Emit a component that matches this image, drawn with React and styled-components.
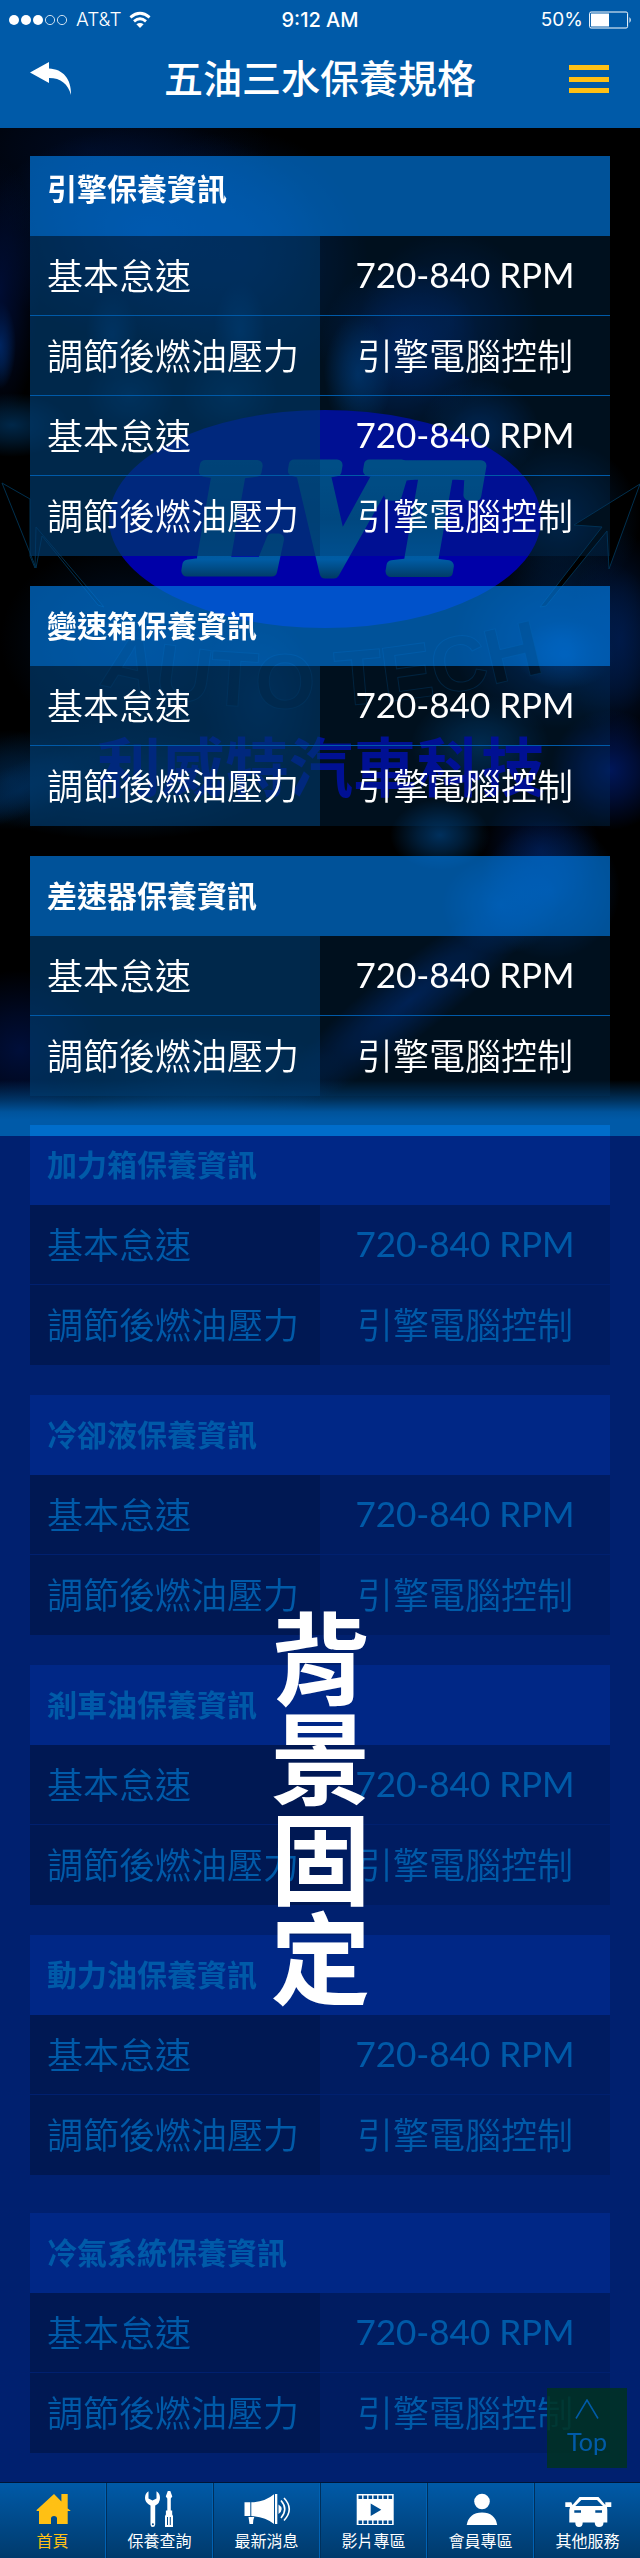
import React from "react";
import styled, { createGlobalStyle } from "styled-components";

const cjk = '"Noto Sans CJK TC", "Noto Sans CJK SC", sans-serif';

const GlobalStyle = createGlobalStyle`
  *, *::before, *::after { box-sizing: border-box; }
  body { margin: 0; background: #005aa8; color: #fff; font-family: ${cjk}; }
  button { border: 0; padding: 0; background: none; color: inherit; font: inherit; cursor: pointer; }
  svg { display: block; }
`;

const Page = styled.div`
  display: flex;
  flex-direction: column;
`;

/* ---------- header ---------- */

const Header = styled.header`
  background: #005aa8;
  padding-bottom: 16px;
`;

const StatusBar = styled.div`
  display: grid;
  grid-template-columns: 1fr auto 1fr;
  align-items: center;
  height: 40px;
  padding: 0 8px;
  font-family: Inter, Roboto, sans-serif;
  font-size: 20px;
  line-height: 24px;
`;

const StatusGroup = styled.div`
  display: flex;
  align-items: center;
  justify-content: ${(p) => (p.$end ? "flex-end" : "flex-start")};
  gap: ${(p) => (p.$end ? 6 : 8)}px;
`;

const Carrier = styled.span`
  font-size: 19px;
  font-weight: 300;
`;

const Clock = styled.span`
  font-weight: 500;
`;

const Percent = styled.span`
  font-size: 19px;
  font-weight: 400;
`;

const TitleBar = styled.div`
  display: grid;
  grid-template-columns: 42px 1fr 42px;
  align-items: center;
  height: 72px;
  padding: 0 30px;
`;

const BarButton = styled.button`
  padding-top: 6px;
`;

const Title = styled.h1`
  margin: 0;
  text-align: center;
  font-size: 39px;
  line-height: 48px;
  font-weight: 500;
`;

/* ---------- content ---------- */

const Main = styled.main`
  position: relative;
  isolation: isolate;
  padding: 28px 30px 29px;
  background: #005aa8;
`;

const Scene = styled.svg`
  position: absolute;
  z-index: -1;
  top: 0;
  left: 0;
  width: 100%;
  height: 1008px;
`;

const Panel = styled.table`
  width: 100%;
  table-layout: fixed;
  border-spacing: 0;
  margin-bottom: ${(p) => p.$gap ?? 30}px;
  text-align: left;
`;

const PanelHead = styled.th`
  height: 80px;
  padding: 0 17px ${(p) => (p.$raised ? 18 : 4)}px;
  background: rgba(0, 117, 218, 0.7);
  font-size: 30px;
  line-height: 40px;
  font-weight: 700;
`;

const Row = styled.tr`
  &:not(:last-child) > * {
    border-bottom: 1px solid #005aa8;
  }
`;

const Label = styled.th`
  height: 80px;
  padding: 0 0 4px 17px;
  background: rgba(0, 57, 107, 0.7);
  font-size: 36px;
  line-height: 48px;
  font-weight: 350;
  white-space: nowrap;
`;

const Value = styled.td`
  height: 80px;
  padding: 0 0 4px;
  background: rgba(0, 53, 100, 0.3);
  font-family: ${(p) => (p.$latin ? "Lato, sans-serif" : cjk)};
  font-size: ${(p) => (p.$latin ? 35 : 36)}px;
  line-height: 48px;
  font-weight: ${(p) => (p.$latin ? 400 : 350)};
  text-align: center;
  white-space: nowrap;
`;

const TopButton = styled.button`
  position: absolute;
  right: 13px;
  bottom: 14px;
  display: flex;
  flex-direction: column;
  align-items: center;
  justify-content: center;
  gap: 6px;
  width: 80px;
  height: 80px;
  background: rgba(0, 140, 48, 0.85);
  && {
    font-family: Lato, sans-serif;
    font-size: 25px;
    line-height: 32px;
  }
`;

const Shade = styled.div`
  position: absolute;
  top: 1008px;
  right: 0;
  bottom: 0;
  left: 0;
  display: flex;
  align-items: center;
  justify-content: center;
  pointer-events: none;
  &::before {
    content: "";
    position: absolute;
    inset: 0;
    background: #005aa8;
    mix-blend-mode: multiply;
  }
`;

const ShadeText = styled.p`
  position: relative;
  margin: 0;
  writing-mode: vertical-rl;
  font-size: 100px;
  line-height: 100px;
  font-weight: 700;
`;

/* ---------- tab bar ---------- */

const TabBar = styled.nav`
  display: flex;
  height: 76px;
  border-top: 1px solid #001536;
  background: linear-gradient(#005aa8, #003a6c);
`;

const Tab = styled.a`
  flex: 1;
  display: flex;
  flex-direction: column;
  align-items: center;
  padding-top: 7px;
  color: ${(p) => (p.$active ? "#ffc014" : "#fff")};
  text-decoration: none;
  font-size: 16px;
  line-height: 24px;
  border-left: 1px solid #00305c;
  border-right: 1px solid #0062b4;
  &:first-child { border-left: 0; }
  &:last-child { border-right: 0; }
`;

const TabIcon = styled.svg`
  width: 48px;
  height: 38px;
  fill: currentColor;
`;

/* ---------- drawings ---------- */

const glows = [
  [90, 150, 180, 90, "#000a20", 1],
  [150, 235, 170, 110, "#002060", 0.8],
  [240, 260, 130, 130, "#001c50", 0.7],
  [0, 345, 16, 44, "#0048a0", 0.8],
  [0, 290, 40, 130, "#001040", 0.8],
  [12, 425, 60, 32, "#003868", 0.7],
  [112, 335, 26, 44, "#004890", 0.5],
  [240, 330, 26, 48, "#005098", 0.5],
  [130, 395, 46, 40, "#004078", 0.5],
  [230, 395, 50, 40, "#004070", 0.5],
  [400, 350, 80, 90, "#002878", 0.7],
  [358, 375, 34, 60, "#0050a0", 0.5],
  [450, 320, 90, 90, "#002468", 0.5],
  [480, 430, 60, 50, "#003c90", 0.5],
  [560, 520, 80, 80, "#003878", 0.5],
  [560, 640, 110, 90, "#003a88", 0.6],
  [565, 655, 50, 34, "#0060d0", 0.4],
  [620, 640, 50, 110, "#001c50", 0.8],
  [130, 640, 130, 100, "#001838", 0.7],
  [120, 780, 170, 60, "#002850", 0.7],
  [10, 780, 70, 50, "#003468", 0.5],
  [260, 700, 60, 90, "#003878", 0.4],
  [480, 745, 70, 50, "#003868", 0.7],
  [610, 770, 60, 60, "#001c70", 0.8],
  [440, 835, 50, 36, "#003c74", 0.8],
  [540, 850, 60, 60, "#001444", 0.8],
  [500, 905, 60, 50, "#0058c8", 0.4],
  [550, 890, 70, 70, "#004098", 0.5],
  [20, 1050, 90, 80, "#001040", 0.9],
  [200, 1075, 150, 50, "#003468", 0.6],
];

const GaragePicture = () => (
  <Scene viewBox="0 128 640 1008" preserveAspectRatio="none" aria-hidden="true">
    <defs>
      {glows.map(([, , , , color, strength], i) => (
        <radialGradient key={i} id={`glow${i}`}>
          <stop offset="0" stopColor={color} stopOpacity={strength} />
          <stop offset="0.45" stopColor={color} stopOpacity={strength * 0.6} />
          <stop offset="1" stopColor={color} stopOpacity="0" />
        </radialGradient>
      ))}
      <linearGradient id="horizon" x1="0" y1="0" x2="0" y2="1">
        <stop offset="0" stopColor="#005aa8" stopOpacity="0" />
        <stop offset="0.5" stopColor="#005aa8" stopOpacity="0.55" />
        <stop offset="0.8" stopColor="#005aa8" stopOpacity="0.92" />
        <stop offset="1" stopColor="#005aa8" />
      </linearGradient>
      <linearGradient id="metal" gradientUnits="userSpaceOnUse" x1="0" y1="461" x2="0" y2="577">
        <stop offset="0" stopColor="#005a96" />
        <stop offset="0.5" stopColor="#00508c" />
        <stop offset="0.85" stopColor="#005ca4" />
        <stop offset="1" stopColor="#003c68" />
      </linearGradient>
      <path id="arc" d="M98 684Q300 738 560 668" />
    </defs>
    <rect y="128" width="640" height="1008" fill="#000" />
    {glows.map(([x, y, rx, ry], i) => (
      <ellipse key={i} cx={x} cy={y} rx={rx} ry={ry} fill={`url(#glow${i})`} />
    ))}
    <g transform="rotate(-38 410 1000)">
      <ellipse cx="410" cy="1000" rx="170" ry="36" fill="url(#glow1)" />
    </g>
    <g transform="rotate(-24 20 790)">
      <ellipse cx="20" cy="790" rx="110" ry="26" fill="url(#glow20)" />
    </g>
    <g fill="#000" stroke="#00304e" strokeWidth="1" strokeLinejoin="round">
      <path d="M2 483L30 499V556L35 568L36 527L104 607L98 605L42 536L36 568Z" />
      <path d="M640 484L574 525L602 527L540 607L546 606L607 531L609 569Z" />
    </g>
    <ellipse cx="325" cy="519" rx="216" ry="109" fill="#0000a8" />
    <text
      x="188 284 378"
      y="571"
      fontFamily="Liberation Serif, serif"
      fontWeight="700"
      fontStyle="italic"
      fontSize="160"
      fill="url(#metal)"
      stroke="url(#metal)"
      strokeWidth="11"
      strokeLinejoin="round"
    >
      LVT
    </text>
    <text
      fontFamily="Liberation Sans, sans-serif"
      fontWeight="700"
      fontSize="78"
      fill="#000"
      fillOpacity="0.7"
      stroke="#003050"
      strokeOpacity="0.6"
    >
      <textPath href="#arc">AUTO TECH</textPath>
    </text>
    <text x="97" y="791" fontFamily={cjk} fontWeight="700" fontSize="64" fill="#0000a8">
      利威特汽車科技
    </text>
    <rect y="1080" width="640" height="40" fill="url(#horizon)" />
    <rect y="1120" width="640" height="16" fill="#005aa8" />
  </Scene>
);

const SignalDots = () => (
  <svg width="60" height="12" viewBox="0 0 60 12" role="img" aria-label="訊號">
    {[0, 1, 2, 3, 4].map((i) => (
      <circle
        key={i}
        cx={6 + i * 12}
        cy="6"
        r={i < 3 ? 5 : 4.6}
        fill={i < 3 ? "#fff" : "none"}
        stroke={i < 3 ? "none" : "#fff"}
        strokeWidth="0.8"
      />
    ))}
  </svg>
);

const Wifi = () => (
  <svg width="22" height="18" viewBox="0 0 22 18" fill="none" stroke="#fff" strokeWidth="2.8" role="img" aria-label="Wi-Fi">
    <path d="M1.4 6.4Q11-1.8 20.600 6.400" />
    <path d="M5 10.400Q11 5 17 10.400" />
    <path d="M11 17L7.400 13.300Q11 10.600 14.600 13.300Z" fill="#fff" stroke="none" />
  </svg>
);

const Battery = () => (
  <svg width="43" height="18" viewBox="0 0 43 18" role="img" aria-label="電量">
    <rect x="0.6" y="1" width="38" height="16" rx="1.500" fill="none" stroke="#fff" strokeWidth="1" />
    <rect x="2" y="2.500" width="18" height="13" fill="#fff" />
    <path d="M40.500 6Q43 9 40.500 12Z" fill="#fff" />
  </svg>
);

const BackArrow = () => (
  <svg width="42" height="34" viewBox="0 0 42 34" fill="#fff" aria-hidden="true">
    <path d="M0 10.500L19 0V6.500C33 7 41.500 17 41 33C38 22 31 16 19 16V21Z" />
  </svg>
);

const Burger = () => (
  <svg width="42" height="28" viewBox="0 0 42 28" fill="#ffc014" aria-hidden="true">
    <path d="M1 0H41V5H1ZM1 12H41V17H1ZM1 23H41V28H1Z" />
  </svg>
);

const icons = {
  home: (
    <path d="M25 4L32.400 11.500V4H38.700V18.500L41.400 20.500V21H38.700V34H28V28.500Q28 26 25 26Q22 26 22 28.500V34H10V21H7.600V20Z" />
  ),
  tools: (
    <>
      <path d="M12.500 1.300V8.500L16.500 10.500L20.500 8.500V1.300Q24 3.300 24 8Q24 13.300 19.200 15.500V34.500Q19 37 16.800 37Q14.500 37 14.500 34.500V15.500Q9 13 9 8Q9 3.300 12.500 1.300ZM16.900 33.300A1 1 0 1 0 16.900 35.300A1 1 0 1 0 16.900 33.300Z" fillRule="evenodd" />
      <path d="M31.800 1H34.300L36.300 6.500L34.800 8.500V20.500H36.200V24.500L37 26V37H29V26L29.900 24.500V20.500H31.300V8.500L29.800 6.500ZM31 27V35H32V27ZM33.800 27V35H34.800V27Z" fillRule="evenodd" />
    </>
  ),
  horn: (
    <>
      <path d="M1.500 12.300H7.300V26H1.500ZM8.300 12.300Q22 12 31 4.300V34Q22 26.500 8.300 26ZM32 4H34.300V34H32ZM5.500 27H11.300Q10 29.500 10 34H6.500Z" />
      <path d="M35.500 14.500Q38.700 16.500 38.700 19Q38.700 21.500 35.500 24Z" />
      <path d="M38 10.500Q45.500 19 38 28M41 8Q51.500 19 41 30.500" fill="none" stroke="currentColor" strokeWidth="1.600" />
    </>
  ),
  film: (
    <>
      <path d="M6.700 4H43.700V35H6.700ZM20.700 13.500V26L31.300 19.700Z" fillRule="evenodd" />
      {[0, 1, 2, 3, 4, 5, 6].map((i) => (
        <path key={i} d={`M${8.5 + i * 5} 5.500h3.600v3.500h-3.600zM${8.5 + i * 5} 30.500h3.600v3.500h-3.600z`} fill="#004c90" />
      ))}
    </>
  ),
  person: (
    <>
      <circle cx="25" cy="11.500" r="7.800" />
      <path d="M9.700 35Q12 22.500 25 22.500Q38 22.500 40.200 35Z" />
    </>
  ),
  car: (
    <path
      fillRule="evenodd"
      d="M15.500 7H34.500L41.300 15V12.300H47.300V17H43L43.300 20V32.500H39.500Q39.500 37 35 37Q31 37 30.700 32.500H18.700Q18.700 37 15 37Q11.300 37 11.300 32.500H5.300V20L6 17H1.300V12.300H7.300L8.500 15ZM17.300 10L11.300 16H39L33 10ZM10.300 20.300V22.700H17V20.300ZM31.300 20.300V22.700H38V20.300Z"
    />
  ),
};

/* ---------- data ---------- */

const idle = ["基本怠速", "720-840 RPM"];
const fuel = ["調節後燃油壓力", "引擎電腦控制"];

const panels = [
  { title: "引擎保養資訊", rows: [idle, fuel, idle, fuel], raised: true },
  { title: "變速箱保養資訊", rows: [idle, fuel] },
  { title: "差速器保養資訊", rows: [idle, fuel], gap: 29 },
  { title: "加力箱保養資訊", rows: [idle, fuel] },
  { title: "冷卻液保養資訊", rows: [idle, fuel] },
  { title: "剎車油保養資訊", rows: [idle, fuel] },
  { title: "動力油保養資訊", rows: [idle, fuel], gap: 38 },
  { title: "冷氣系統保養資訊", rows: [idle, fuel], gap: 0 },
];

const tabs = [
  ["首頁", "home"],
  ["保養查詢", "tools"],
  ["最新消息", "horn"],
  ["影片專區", "film"],
  ["會員專區", "person"],
  ["其他服務", "car"],
];

export default function App() {
  return (
    <Page>
      <GlobalStyle />
      <Header>
        <StatusBar>
          <StatusGroup>
            <SignalDots />
            <Carrier>AT&amp;T</Carrier>
            <Wifi />
          </StatusGroup>
          <Clock>9:12 AM</Clock>
          <StatusGroup $end>
            <Percent>50%</Percent>
            <Battery />
          </StatusGroup>
        </StatusBar>
        <TitleBar>
          <BarButton type="button" aria-label="返回">
            <BackArrow />
          </BarButton>
          <Title>五油三水保養規格</Title>
          <BarButton type="button" aria-label="選單">
            <Burger />
          </BarButton>
        </TitleBar>
      </Header>

      <Main>
        <GaragePicture />
        {panels.map(({ title, rows, raised, gap }) => (
          <Panel key={title} $gap={gap}>
            <thead>
              <tr>
                <PanelHead colSpan={2} $raised={raised}>
                  {title}
                </PanelHead>
              </tr>
            </thead>
            <tbody>
              {rows.map(([label, value], i) => (
                <Row key={i}>
                  <Label scope="row">{label}</Label>
                  <Value $latin={value === idle[1]}>{value}</Value>
                </Row>
              ))}
            </tbody>
          </Panel>
        ))}
        <TopButton type="button">
          <svg width="24" height="20" viewBox="0 0 24 20" fill="none" stroke="#fff" strokeWidth="1.500" aria-hidden="true">
            <path d="M1 19.500L12 1L23 19.500" />
          </svg>
          Top
        </TopButton>
        <Shade>
          <ShadeText>背景固定</ShadeText>
        </Shade>
      </Main>

      <TabBar>
        {tabs.map(([name, icon], i) => (
          <Tab key={name} href="#" $active={i === 0}>
            <TabIcon viewBox="0 0 48 38" aria-hidden="true">
              {icons[icon]}
            </TabIcon>
            {name}
          </Tab>
        ))}
      </TabBar>
    </Page>
  );
}
